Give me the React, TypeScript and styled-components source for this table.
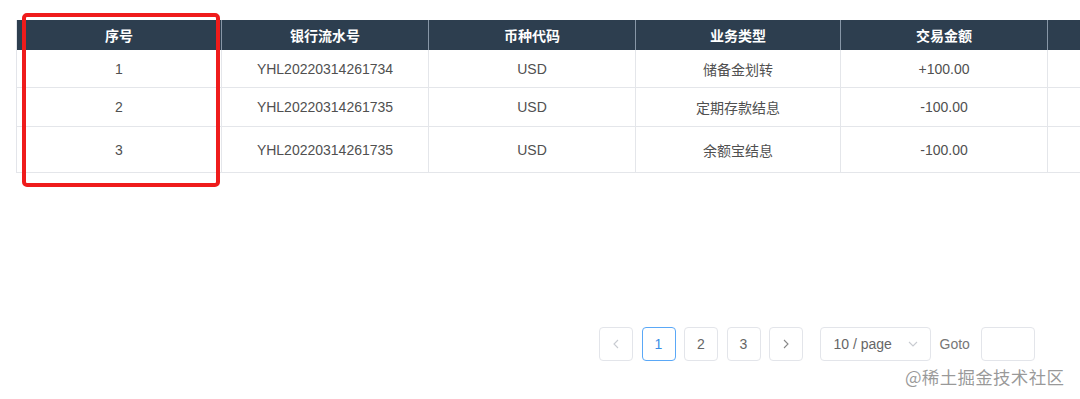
import React from "react";
import styled, { createGlobalStyle } from "styled-components";

const Global = createGlobalStyle`
  html, body { margin: 0; padding: 0; background: #fff; overflow: hidden; }
  body { font-family: "Liberation Sans", Arial, "Noto Sans CJK SC", sans-serif; }
`;

const Page = styled.div`
  position: relative;
  width: 1080px;
  height: 399px;
  padding: 20px 0 0 16px;
  box-sizing: border-box;
  overflow: hidden;
`;

const Table = styled.div`
  width: 1300px;
  border-left: 1px solid #e3e5ea;
`;

const cols = "205px 207px 207px 205px 207px 260px";

const HeadRow = styled.div`
  display: grid;
  grid-template-columns: ${cols};
  height: 30px;
  background: #2d3e4f;
`;

const HeadCell = styled.div`
  display: flex;
  align-items: center;
  justify-content: center;
  color: #fff;
  font-size: 14px;
  font-weight: 700;
  font-family: "Liberation Sans", "Noto Sans CJK SC", sans-serif;
  border-right: 1px solid #8796a6;
`;

const Row = styled.div<{ $h: number }>`
  display: grid;
  grid-template-columns: ${cols};
  height: ${(p) => p.$h}px;
  box-sizing: border-box;
  border-bottom: 1px solid #e4e6ea;
`;

const Cell = styled.div`
  display: flex;
  align-items: center;
  justify-content: center;
  color: #505050;
  font-size: 14px;
  font-family: "Liberation Sans", "Noto Sans CJK SC", sans-serif;
  border-right: 1px solid #e4e6ea;
`;

const Highlight = styled.div`
  position: absolute;
  left: 22px;
  top: 13px;
  width: 198px;
  height: 174px;
  border: 4px solid #ef1c1c;
  border-radius: 5px;
  box-sizing: border-box;
  pointer-events: none;
`;

const Pager = styled.div`
  display: flex;
  align-items: center;
  margin-top: 154px;
  margin-left: 583px;
`;

const PageBtn = styled.div<{ $active?: boolean; $disabled?: boolean }>`
  width: 34px;
  height: 34px;
  box-sizing: border-box;
  border: 1px solid ${(p) => (p.$active ? "#5aa8f7" : "#e3e5ea")};
  border-radius: 4px;
  display: flex;
  align-items: center;
  justify-content: center;
  margin-right: 8.5px;
  font-size: 14px;
  color: ${(p) => (p.$active ? "#3a8ee6" : p.$disabled ? "#c8cbd1" : "#666")};
`;

const Select = styled.div`
  width: 111px;
  height: 34px;
  box-sizing: border-box;
  border: 1px solid #e3e5ea;
  border-radius: 4px;
  display: flex;
  align-items: center;
  padding: 0 12px 0 13px;
  margin-left: 8px;
  font-size: 14px;
  color: #666;
  justify-content: space-between;
`;

const GotoLabel = styled.span`
  font-size: 14px;
  color: #777;
  margin: 0 11px 0 9px;
`;

const GotoInput = styled.div`
  width: 54px;
  height: 34px;
  box-sizing: border-box;
  border: 1px solid #e3e5ea;
  border-radius: 4px;
`;

const Watermark = styled.div`
  position: absolute;
  left: 905px;
  top: 364px;
  font-size: 17.5px;
  color: rgba(120, 120, 120, 0.75);
  font-family: "Noto Sans CJK SC", sans-serif;
  letter-spacing: 0.3px;
`;

const Chevron = ({ dir, color }: { dir: "left" | "right" | "down"; color: string }) => {
  const d =
    dir === "left" ? "M6 1 L2 5 L6 9" : dir === "right" ? "M2 1 L6 5 L2 9" : "M1 2 L5 6 L9 2";
  const w = dir === "down" ? 10 : 8;
  const h = dir === "down" ? 8 : 10;
  return (
    <svg width={w} height={h} viewBox={`0 0 ${w} ${h}`}>
      <path d={d} fill="none" stroke={color} strokeWidth="1.1" />
    </svg>
  );
};

const headers = ["序号", "银行流水号", "币种代码", "业务类型", "交易金额", ""];
const rows = [
  { h: 38, cells: ["1", "YHL20220314261734", "USD", "储备金划转", "+100.00", ""] },
  { h: 39, cells: ["2", "YHL20220314261735", "USD", "定期存款结息", "-100.00", ""] },
  { h: 46, cells: ["3", "YHL20220314261735", "USD", "余额宝结息", "-100.00", ""] },
];

export default function App() {
  return (
    <Page>
      <Global />
      <Table>
        <HeadRow>
          {headers.map((h, i) => (
            <HeadCell key={i}>{h}</HeadCell>
          ))}
        </HeadRow>
        {rows.map((r, i) => (
          <Row key={i} $h={r.h}>
            {r.cells.map((c, j) => (
              <Cell key={j}>{c}</Cell>
            ))}
          </Row>
        ))}
      </Table>
      <Pager>
        <PageBtn $disabled>
          <Chevron dir="left" color="#c8cbd1" />
        </PageBtn>
        <PageBtn $active>1</PageBtn>
        <PageBtn>2</PageBtn>
        <PageBtn>3</PageBtn>
        <PageBtn>
          <Chevron dir="right" color="#888" />
        </PageBtn>
        <Select>
          <span>10 / page</span>
          <Chevron dir="down" color="#c8cbd1" />
        </Select>
        <GotoLabel>Goto</GotoLabel>
        <GotoInput />
      </Pager>
      <Highlight />
      <Watermark>@稀土掘金技术社区</Watermark>
    </Page>
  );
}
